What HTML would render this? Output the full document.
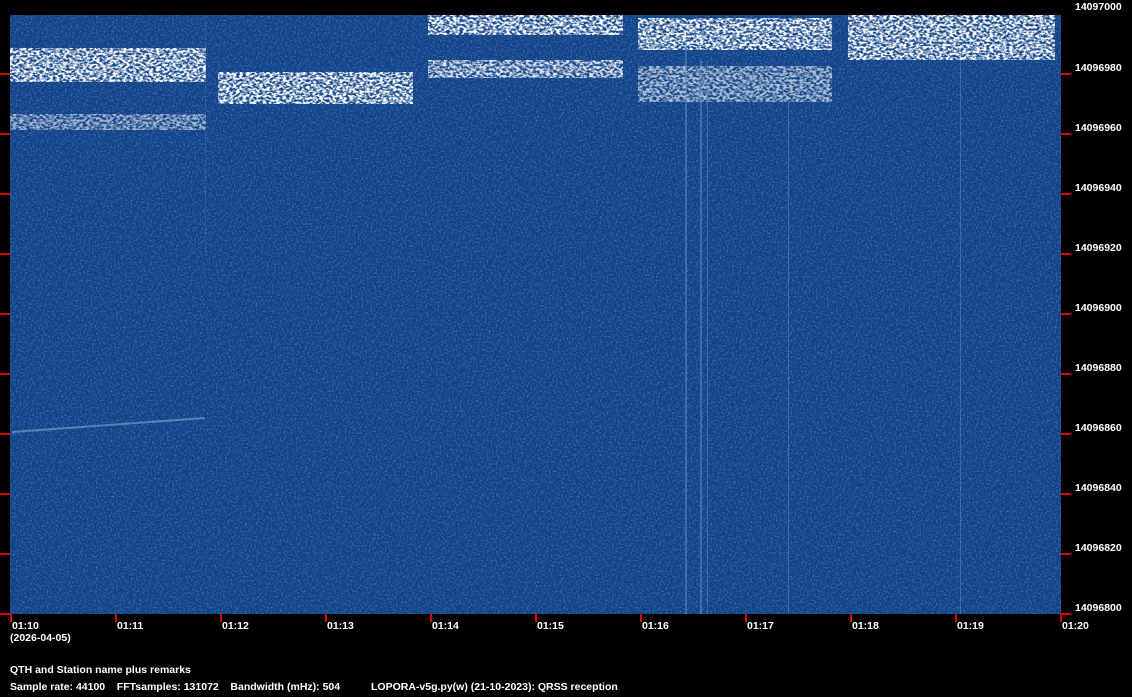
<!DOCTYPE html>
<html><head><meta charset="utf-8"><style>
html,body{margin:0;padding:0;background:#000;width:1132px;height:697px;overflow:hidden}
svg text{font-family:"Liberation Sans",Arial,sans-serif;font-weight:bold;font-size:10.5px;fill:#fff}
</style></head><body>
<svg width="1132" height="697" xmlns="http://www.w3.org/2000/svg">
<defs>
<filter id="n" x="0" y="0" width="100%" height="100%" color-interpolation-filters="sRGB">
<feTurbulence type="fractalNoise" baseFrequency="0.55" numOctaves="2" seed="3" result="t"/>
<feColorMatrix in="t" type="matrix" values="0 0 0 0 0.07  0 0 0 0 0.26  0 0 0 0 0.52  0 0 0 0 1" result="b"/>
<feColorMatrix in="t" type="matrix" values="0 0 0 0 0  0 0 0 0 0  0 0 0 0 0  2 0 0 0 -0.9" result="a"/>
<feFlood flood-color="#4a80c0"/>
<feComposite in2="a" operator="in" result="hl"/>
<feMerge><feMergeNode in="b"/><feMergeNode in="hl"/></feMerge>
</filter>
<filter id="w" x="0" y="0" width="100%" height="100%" color-interpolation-filters="sRGB">
<feTurbulence type="fractalNoise" baseFrequency="0.3 0.45" numOctaves="2" seed="7" result="t"/>
<feColorMatrix in="t" type="matrix" values="0 0 0 0 1  0 0 0 0 1  0 0 0 0 1  4 0 0 0 -1.5"/>
</filter>
</defs>
<rect x="10" y="15" width="1051" height="599" filter="url(#n)"/>
<rect x="10" y="48" width="196" height="34" filter="url(#w)"/>
<rect x="10" y="114" width="196" height="16" filter="url(#w)" opacity="0.6"/>
<rect x="218" y="72" width="195" height="32" filter="url(#w)"/>
<rect x="428" y="15" width="195" height="20" filter="url(#w)"/>
<rect x="428" y="60" width="195" height="18" filter="url(#w)" opacity="0.85"/>
<rect x="638" y="18" width="194" height="32" filter="url(#w)"/>
<rect x="638" y="66" width="194" height="36" filter="url(#w)" opacity="0.65"/>
<rect x="848" y="15" width="207" height="45" filter="url(#w)"/>
<g fill="#5f90c8" opacity="0.5">
<rect x="685" y="40" width="2" height="574"/>
<rect x="700" y="60" width="2" height="554"/>
<rect x="707" y="60" width="1" height="554"/>
<rect x="788" y="100" width="1" height="514"/>
<rect x="960" y="60" width="1" height="554"/>
<rect x="205" y="15" width="1" height="240" opacity="0.5"/>
</g>
<line x1="12" y1="432" x2="205" y2="418" stroke="#7fa8d8" stroke-width="2" opacity="0.6"/>
<g fill="#e00000">
<rect x="0" y="73" width="10" height="2"/><rect x="0" y="133" width="10" height="2"/><rect x="0" y="193" width="10" height="2"/><rect x="0" y="253" width="10" height="2"/><rect x="0" y="313" width="10" height="2"/><rect x="0" y="373" width="10" height="2"/><rect x="0" y="433" width="10" height="2"/><rect x="0" y="493" width="10" height="2"/><rect x="0" y="553" width="10" height="2"/><rect x="0" y="613" width="10" height="2"/>
<rect x="1061" y="73" width="10" height="2"/><rect x="1061" y="133" width="10" height="2"/><rect x="1061" y="193" width="10" height="2"/><rect x="1061" y="253" width="10" height="2"/><rect x="1061" y="313" width="10" height="2"/><rect x="1061" y="373" width="10" height="2"/><rect x="1061" y="433" width="10" height="2"/><rect x="1061" y="493" width="10" height="2"/><rect x="1061" y="553" width="10" height="2"/><rect x="1061" y="613" width="10" height="2"/>
<rect x="10" y="614" width="2" height="8"/><rect x="115" y="614" width="2" height="8"/><rect x="220" y="614" width="2" height="8"/><rect x="325" y="614" width="2" height="8"/><rect x="430" y="614" width="2" height="8"/><rect x="535" y="614" width="2" height="8"/><rect x="640" y="614" width="2" height="8"/><rect x="745" y="614" width="2" height="8"/><rect x="850" y="614" width="2" height="8"/><rect x="955" y="614" width="2" height="8"/><rect x="1060" y="614" width="2" height="8"/>
</g>
<g>
<text x="1075" y="10">14097000</text>
<text x="1075" y="71">14096980</text>
<text x="1075" y="131">14096960</text>
<text x="1075" y="191">14096940</text>
<text x="1075" y="251">14096920</text>
<text x="1075" y="311">14096900</text>
<text x="1075" y="371">14096880</text>
<text x="1075" y="431">14096860</text>
<text x="1075" y="491">14096840</text>
<text x="1075" y="551">14096820</text>
<text x="1075" y="611">14096800</text>
<text x="12" y="629">01:10</text><text x="117" y="629">01:11</text><text x="222" y="629">01:12</text><text x="327" y="629">01:13</text><text x="432" y="629">01:14</text><text x="537" y="629">01:15</text><text x="642" y="629">01:16</text><text x="747" y="629">01:17</text><text x="852" y="629">01:18</text><text x="957" y="629">01:19</text><text x="1062" y="629">01:20</text>
<text x="10" y="641">(2026-04-05)</text>
<text x="10" y="673">QTH and Station name plus remarks</text>
<text x="10" y="690" xml:space="preserve">Sample rate: 44100    FFTsamples: 131072    Bandwidth (mHz): 504</text>
<text x="371" y="690">LOPORA-v5g.py(w) (21-10-2023): QRSS reception</text>
</g>
</svg>
</body></html>
